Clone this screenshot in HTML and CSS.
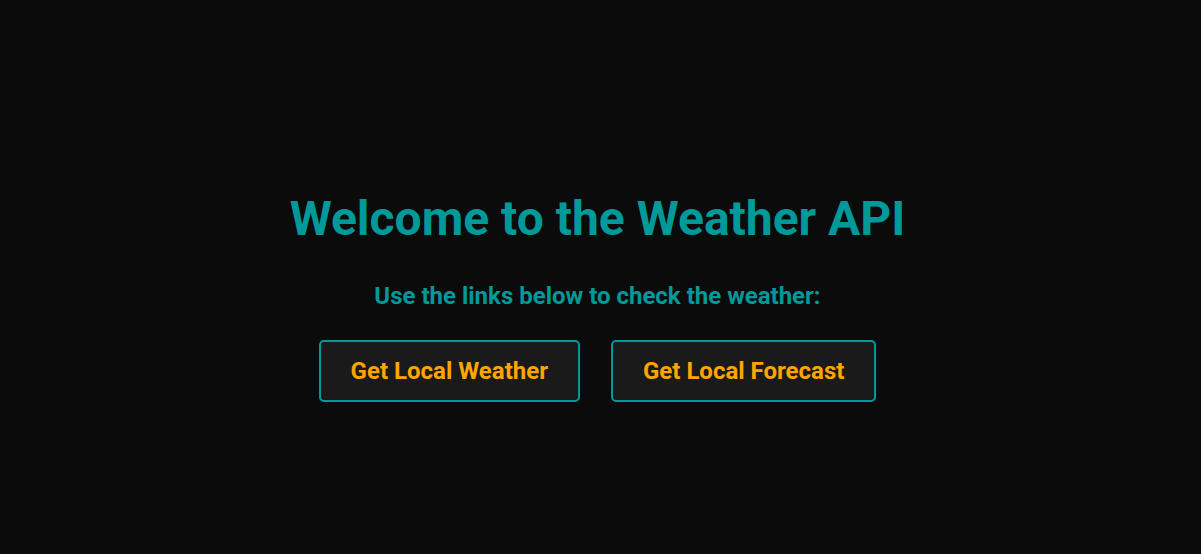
FILE: index.html
```
<!DOCTYPE html>
<html>
<head>
<meta charset="utf-8">
<link rel="stylesheet" href="styles.css">
</head>
<body>
<main class="page">
  <h1 class="title">Welcome to the Weather API</h1>
  <p class="subtitle">Use the links below to check the weather:</p>
  <div class="links">
    <a class="btn" href="#">Get Local Weather</a>
    <a class="btn" href="#">Get Local Forecast</a>
  </div>
</main>
</body>
</html>
```
FILE: styles.css
```
html, body {
  margin: 0;
  padding: 0;
  background: #0b0b0b;
}
body {
  font-family: Roboto, "Liberation Sans", sans-serif;
}
.page {
  min-height: 554px;
  display: flex;
  flex-direction: column;
  align-items: center;
  justify-content: center;
  box-sizing: border-box;
  padding-top: 39px;
  padding-right: 6px;
}
.title {
  margin: 0;
  font-size: 48px;
  font-weight: 700;
  color: #009999;
  line-height: 56px;
}
.subtitle {
  margin: 35px 0 0;
  font-size: 24px;
  font-weight: 700;
  color: #009999;
  line-height: 28px;
}
.links {
  display: flex;
  gap: 31px;
  margin-top: 30px;
}
.btn {
  display: block;
  padding: 15px 30px;
  border: 2px solid #009999;
  border-radius: 5px;
  background: #1a1a1a;
  color: #ffa500;
  font-size: 24px;
  font-weight: 700;
  line-height: 28px;
  text-decoration: none;
}
```
